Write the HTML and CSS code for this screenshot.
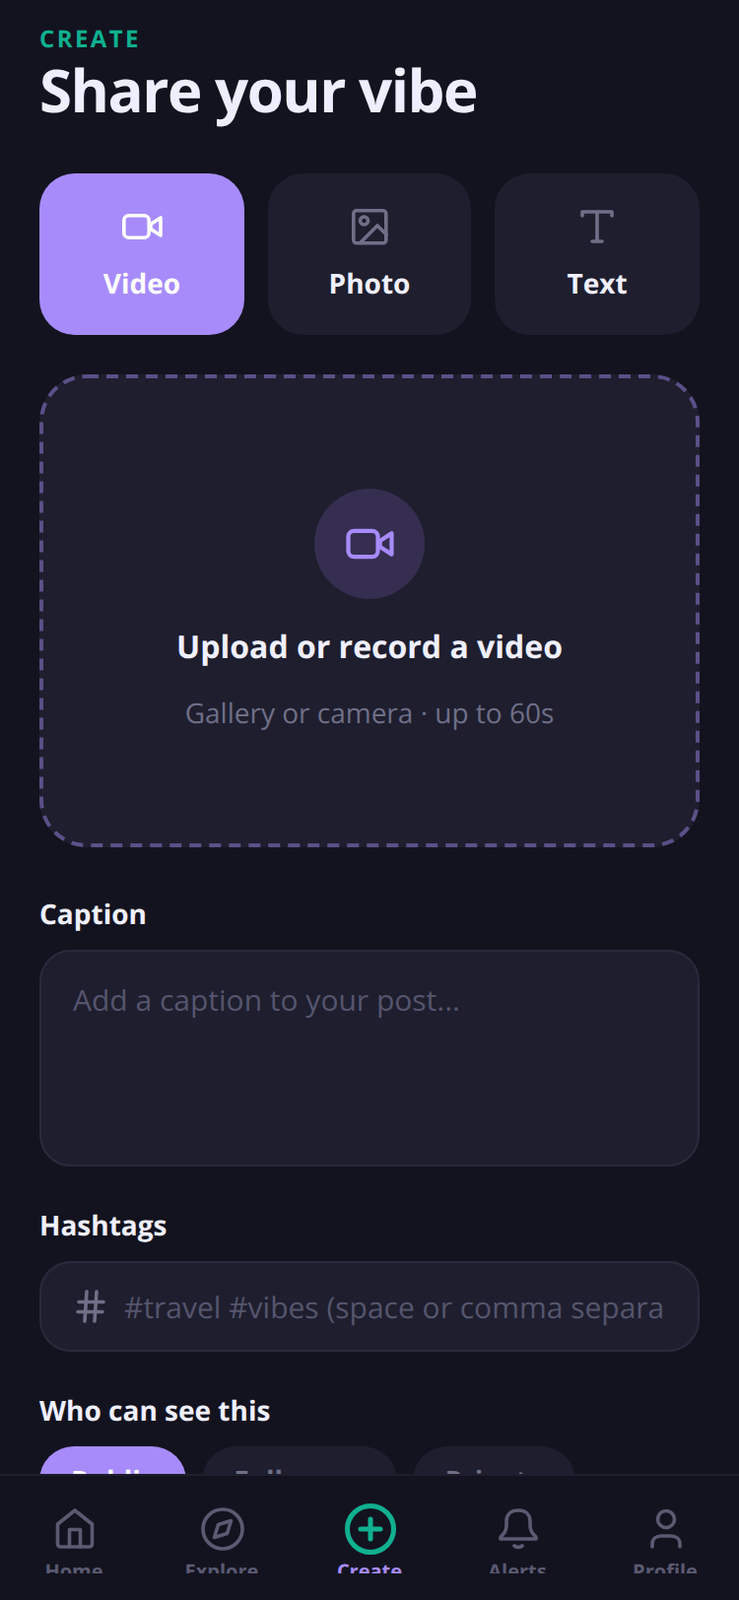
FILE: index.html
```html
<!DOCTYPE html>
<html lang="en">

<head>
    <meta charset="UTF-8">
    <meta name="viewport" content="width=device-width, initial-scale=1.0">
    <title>Create</title>
    <link rel="stylesheet" href="styles.css">
</head>

<body>
    <svg class="icon-defs" width="0" height="0">
        <symbol id="icon-video" viewBox="0 0 44 44">
            <rect x="3.8" y="10.8" width="25.4" height="22.4" rx="5"></rect>
            <polygon points="31,19.5 41,13 41,31 31,24.5"></polygon>
        </symbol>
    </svg>

    <main class="page">
        <p class="eyebrow">CREATE</p>
        <h1 class="title">Share your vibe</h1>

        <div class="type-tabs">
            <div class="type-tab active">
                <svg class="icon" width="44" height="44"><use href="#icon-video"></use></svg>
                <span>Video</span>
            </div>
            <div class="type-tab">
                <svg class="icon" width="44" height="44" viewBox="0 0 44 44">
                    <rect x="5.8" y="5.8" width="33" height="33" rx="3"></rect>
                    <circle cx="16.5" cy="16" r="4"></circle>
                    <path d="M13 38 L30 21 L39 30"></path>
                </svg>
                <span>Photo</span>
            </div>
            <div class="type-tab">
                <svg class="icon" width="44" height="44" viewBox="0 0 44 44">
                    <path d="M7 11 V7 H37 V11 M22 7 V37 M17 37 H27"></path>
                </svg>
                <span>Text</span>
            </div>
        </div>

        <div class="dropzone">
            <svg class="dropzone-border" width="670" height="480">
                <rect x="2" y="2" width="666" height="476" rx="46"></rect>
            </svg>
            <div class="dropzone-icon">
                <svg class="icon" width="52" height="52"><use href="#icon-video"></use></svg>
            </div>
            <p class="dropzone-title">Upload or record a video</p>
            <p class="dropzone-sub">Gallery or camera · up to 60s</p>
        </div>

        <label class="field-label">Caption</label>
        <textarea class="caption-input" placeholder="Add a caption to your post..."></textarea>

        <label class="field-label">Hashtags</label>
        <div class="hashtag-box">
            <svg class="icon hash" width="36" height="36" viewBox="0 0 36 36">
                <path d="M6 13.500 H31 M5 23.500 H30 M14 3 L12 33 M24 3 L22 33"></path>
            </svg>
            <input class="hashtag-input" type="text" placeholder="#travel #vibes (space or comma separated)">
        </div>

        <label class="field-label">Who can see this</label>
        <div class="pills">
            <div class="pill active">Public</div>
            <div class="pill">Followers</div>
            <div class="pill">Private</div>
        </div>
    </main>

    <nav class="tabbar">
        <div class="tab">
            <div class="tab-icon">
                <svg class="icon" width="44" height="44" viewBox="0 0 44 44">
                    <path d="M22 3 L39.500 17 V37 Q39.500 40 36.500 40 H7.500 Q4.500 40 4.500 37 V17 Z"></path>
                    <path d="M16.500 40 V22.500 H27.500 V40"></path>
                </svg>
            </div>
            <span>Home</span>
        </div>
        <div class="tab">
            <div class="tab-icon">
                <svg class="icon" width="44" height="44" viewBox="0 0 44 44">
                    <circle cx="22" cy="22" r="20"></circle>
                    <path d="M30.500 13.500 L26.500 26.500 L13.500 30.500 L17.500 17.500 Z"></path>
                </svg>
            </div>
            <span>Explore</span>
        </div>
        <div class="tab current">
            <div class="tab-icon">
                <svg class="icon" width="52" height="52" viewBox="0 0 52 52">
                    <circle cx="26" cy="26" r="23.500"></circle>
                    <path d="M26 16 V36 M16 26 H36"></path>
                </svg>
            </div>
            <span>Create</span>
        </div>
        <div class="tab">
            <div class="tab-icon">
                <svg class="icon" width="44" height="44" viewBox="0 0 44 44">
                    <path d="M4 32 Q3.500 30 6 28 Q10 24 10 18 V14 C10 7 15 3 22 3 C29 3 34 7 34 14 V18 Q34 24 38 28 Q40.500 30 40 32 Z"></path>
                    <path d="M18 39 Q22 42 26 39"></path>
                </svg>
            </div>
            <span>Alerts</span>
        </div>
        <div class="tab">
            <div class="tab-icon">
                <svg class="icon" width="44" height="44" viewBox="0 0 44 44">
                    <circle cx="22" cy="12" r="8.500"></circle>
                    <path d="M8 40 V37 C8 32 12 29 17 29 H27 C32 29 36 32 36 37 V40"></path>
                </svg>
            </div>
            <span>Profile</span>
        </div>
    </nav>
</body>

</html>
```

FILE: styles.css
```css
* {
    box-sizing: border-box;
}

html,
body {
    margin: 0;
    height: 1624px;
    overflow: hidden;
}

body {
    position: relative;
    background-color: #13131f;
    color: #f0f0ff;
    font-family: "Open Sans", "Noto Sans", sans-serif;
    text-rendering: geometricPrecision;
}

.icon-defs {
    position: absolute;
}

.icon {
    display: block;
    flex: none;
    fill: none;
    stroke: currentColor;
    stroke-width: 3.6;
    stroke-linecap: round;
    stroke-linejoin: round;
}

.page {
    padding: 25px 40px 0;
}

.eyebrow {
    margin: 0;
    font-size: 24px;
    line-height: 30px;
    font-weight: 700;
    letter-spacing: 2.4px;
    color: #10b090;
}

.title {
    margin: 1px 0 0;
    font-size: 60px;
    line-height: 70px;
    font-weight: 700;
    letter-spacing: -1.5px;
    color: #eeeeff;
}

.type-tabs {
    display: grid;
    grid-template-columns: 208px 1fr 208px;
    gap: 24px;
    margin-top: 50px;
}

.type-tab {
    height: 164px;
    padding-top: 32px;
    display: flex;
    flex-direction: column;
    align-items: center;
    gap: 17px;
    background-color: #1e1e2e;
    border-radius: 36px;
    color: #6f6f88;
}

.type-tab span {
    font-size: 28px;
    line-height: 38px;
    font-weight: 700;
    color: #f0f0ff;
}

.type-tab.active {
    background-color: #a78bfa;
    color: #fff;
}

.type-tab.active span {
    color: #fff;
}

.dropzone {
    position: relative;
    height: 480px;
    margin-top: 40px;
    display: flex;
    flex-direction: column;
    align-items: center;
    padding-top: 116px;
    background-color: #1e1e2e;
    border-radius: 48px;
}

.dropzone-border {
    position: absolute;
    left: 0;
    top: 0;
    fill: none;
    stroke: #5b5088;
    stroke-width: 4;
    stroke-dasharray: 12 8;
}

.dropzone-icon {
    width: 112px;
    height: 112px;
    display: flex;
    align-items: center;
    justify-content: center;
    border-radius: 50%;
    background-color: #352e50;
    color: #a78bfa;
}

.dropzone-title {
    margin: 25px 0 0;
    font-size: 32px;
    line-height: 48px;
    font-weight: 700;
}

.dropzone-sub {
    margin: 24px 0 0;
    font-size: 28px;
    line-height: 38px;
    color: #6f6f88;
}

.field-label {
    display: block;
    font-size: 28px;
    line-height: 40px;
    font-weight: 700;
    color: #f0f0ff;
}

.dropzone + .field-label {
    margin-top: 48px;
}

.caption-input {
    display: block;
    width: 100%;
    height: 220px;
    margin: 16px 0 40px;
    padding: 29px 32px;
    resize: none;
    background-color: #1e1e2e;
    border: 2px solid #2a2a3c;
    border-radius: 32px;
    outline: none;
    font-family: inherit;
    font-size: 30px;
    line-height: 40px;
    color: #f0f0ff;
}

.caption-input::placeholder,
.hashtag-input::placeholder {
    color: #55556d;
    opacity: 1;
}

.hashtag-box {
    display: flex;
    align-items: center;
    gap: 16px;
    height: 92px;
    margin: 16px 0 40px;
    padding: 0 34px 0 32px;
    background-color: #1e1e2e;
    border: 2px solid #2a2a3c;
    border-radius: 32px;
}

.hash {
    color: #6f6f88;
}

.hashtag-input {
    flex: 1;
    min-width: 0;
    padding: 0;
    background: none;
    border: none;
    outline: none;
    font-family: inherit;
    font-size: 30px;
    text-rendering: geometricPrecision;
    color: #f0f0ff;
}

.pills {
    display: flex;
    gap: 16px;
    margin-top: 16px;
}

.pill {
    padding: 16px 32px;
    background-color: #1e1e2e;
    border-radius: 36px;
    font-size: 28px;
    line-height: 38px;
    font-weight: 700;
    color: #6f6f88;
}

.pill.active {
    background-color: #a78bfa;
    color: #fff;
}

.tabbar {
    position: absolute;
    left: 0;
    right: 0;
    bottom: 0;
    height: 128px;
    display: flex;
    padding-top: 28px;
    background-color: #13131f;
    border-top: 2px solid #1e1e2e;
}

.tab {
    flex: 1;
    height: 71px;
    overflow: hidden;
    display: flex;
    flex-direction: column;
    align-items: center;
    color: #5a5a72;
    font-size: 20px;
    line-height: 28px;
    font-weight: 700;
}

.tab-icon {
    flex: none;
    height: 52px;
    margin: 0 0 3px 2px;
    display: flex;
    align-items: center;
}

.tab span {
    flex: none;
}

.tab.current {
    color: #a78bfa;
}

.tab.current .icon {
    color: #10b090;
    stroke-width: 5;
}
```
